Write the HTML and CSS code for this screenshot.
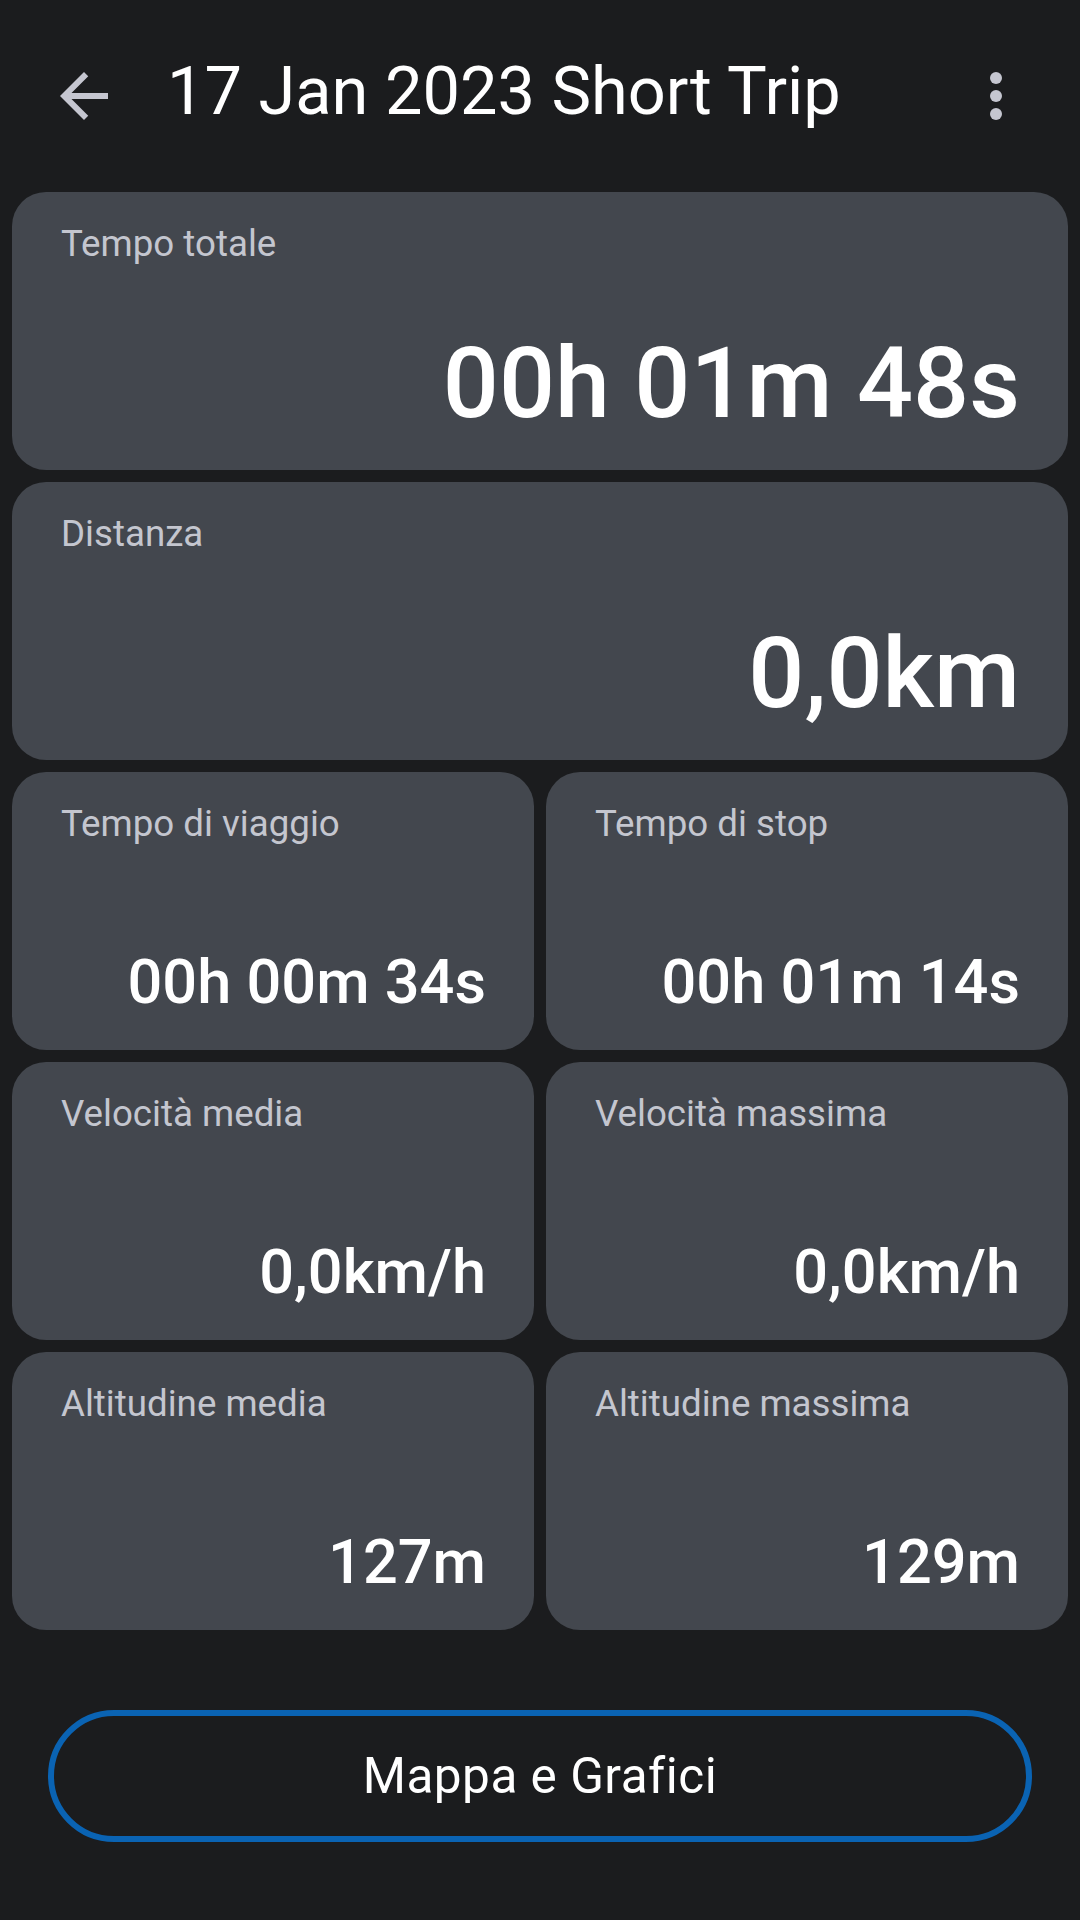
FILE: index.html
```html
<!DOCTYPE HTML>
<html>
<head>
    <meta name="viewport" content="width=device-width, user-scalable=0">
    <title>17 Jan 2023 Short Trip</title>
    <link rel="stylesheet" href="styles.css">
</head>
<body>
<div class="toolbar">
    <button class="icon-button" type="button">
        <svg viewBox="0 0 24 24">
            <path d="M20 11H7.83l5.59-5.59L12 4l-8 8 8 8 1.41-1.41L7.83 13H20v-2z"/>
        </svg>
    </button>
    <h1 class="title">17 Jan 2023 Short Trip</h1>
    <button class="icon-button menu" type="button">
        <svg viewBox="0 0 24 24">
            <circle cx="12" cy="6" r="2"/>
            <circle cx="12" cy="12" r="2"/>
            <circle cx="12" cy="18" r="2"/>
        </svg>
    </button>
</div>

<div class="stats">
    <div class="card wide">
        <p class="label">Tempo totale</p>
        <p class="value big">00h 01m 48s</p>
    </div>
    <div class="card wide">
        <p class="label">Distanza</p>
        <p class="value big">0,0km</p>
    </div>
    <div class="card">
        <p class="label">Tempo di viaggio</p>
        <p class="value">00h 00m 34s</p>
    </div>
    <div class="card">
        <p class="label">Tempo di stop</p>
        <p class="value">00h 01m 14s</p>
    </div>
    <div class="card">
        <p class="label">Velocità media</p>
        <p class="value">0,0km/h</p>
    </div>
    <div class="card">
        <p class="label">Velocità massima</p>
        <p class="value">0,0km/h</p>
    </div>
    <div class="card">
        <p class="label">Altitudine media</p>
        <p class="value">127m</p>
    </div>
    <div class="card">
        <p class="label">Altitudine massima</p>
        <p class="value">129m</p>
    </div>
</div>

<div class="actions">
    <button class="outlined" type="button">Mappa e Grafici</button>
</div>
</body>
</html>
```

FILE: styles.css
```css
body, html {
    background-color: #1b1c1e;
    width: 100%;
    height: 100%;
    padding: 0;
    margin: 0;
    color: #ffffff;
    font-family: Roboto, "Noto Sans", sans-serif;
}

.toolbar {
    height: 192px;
    display: flex;
    align-items: center;
    padding: 0 48px 0 48px;
    box-sizing: border-box;
}

.icon-button {
    width: 72px;
    height: 72px;
    padding: 0;
    background-color: transparent;
    border: none;
    outline: none;
    fill: #c5c6d0;
}

.icon-button svg {
    width: 72px;
    height: 72px;
    display: block;
}

.title {
    flex: 1;
    margin: 0 0 10px 47px;
    font-size: 66.7px;
    font-weight: 400;
    line-height: 1;
    letter-spacing: 0;
}

.stats {
    display: grid;
    grid-template-columns: 1fr 1fr;
    gap: 12px;
    padding: 0 12px;
}

.card {
    height: 278px;
    box-sizing: border-box;
    background-color: #43474e;
    border-radius: 34px;
    padding: 30px 48px 37px 49px;
    display: flex;
    flex-direction: column;
}

.card.wide {
    grid-column: span 2;
}

.label {
    margin: 0;
    font-size: 36.7px;
    line-height: 43px;
    color: #c4c6cf;
}

.value {
    margin: auto 0 0;
    text-align: right;
    font-size: 61.3px;
    font-weight: 500;
    line-height: 1;
}

.value.big {
    font-size: 98.7px;
}

.actions {
    padding: 80px 48px 0;
}

.outlined {
    width: 100%;
    height: 132px;
    border: 6px solid #0a63b3;
    border-radius: 66px;
    background-color: transparent;
    color: #ffffff;
    font-family: Roboto, "Noto Sans", sans-serif;
    font-size: 49.5px;
    letter-spacing: 0.5px;
    outline: none;
}
```
